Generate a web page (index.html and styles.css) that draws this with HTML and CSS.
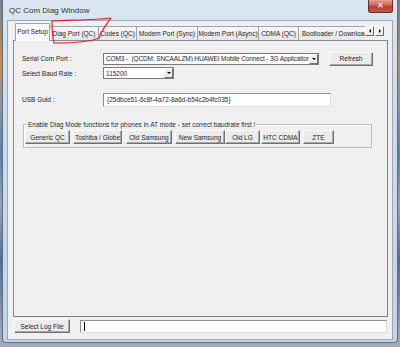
FILE: index.html
```
<!DOCTYPE html>
<html lang="en">
<head>
  <meta charset="UTF-8">
  <title>QC Com Diag Window</title>
  <link rel="stylesheet" href="styles.css">
</head>
<body>
  <div class="window">
    <div class="titlebar">
      <span class="title">QC Com Diag Window</span>
      <div class="close-btn">&#x2715;</div>
    </div>

    <div class="client">
      <!-- Tab strip -->
      <div class="tabs">
        <div class="tab active w-t1">Port Setup</div>
        <div class="tab w-t2">Diag Port (QC)</div>
        <div class="tab w-t3">Codes (QC)</div>
        <div class="tab w-t4">Modem Port (Sync)</div>
        <div class="tab w-t5">Modem Port (Async)</div>
        <div class="tab w-t6">CDMA (QC)</div>
        <div class="tab cut">Bootloader / Downloac</div>
        <div class="tab-arrows">
          <div class="arrow-btn"><span class="tri left"></span></div>
          <div class="arrow-btn"><span class="tri right"></span></div>
        </div>
      </div>

      <!-- Port Setup page -->
      <div class="panel">
        <div class="row row-com">
          <div class="label">Serial Com Port :</div>
          <div class="combo combo-com">
            <span class="combo-text tight">COM3 -&nbsp; (QCDM: SNCAALZM) HUAWEI Mobile Connect - 3G Application Ir</span>
            <span class="combo-btn"><span class="tri down"></span></span>
          </div>
          <button class="btn refresh-btn">Refresh</button>
        </div>
        <div class="row row-baud">
          <div class="label">Select Baud Rate :</div>
          <div class="combo combo-baud">
            <span class="combo-text">115200</span>
            <span class="combo-btn"><span class="tri down"></span></span>
          </div>
        </div>
        <div class="row row-guid">
          <div class="label">USB Guid :</div>
          <div class="textbox guid-box">{25dbce51-6c8f-4a72-8a6d-b54c2b4fc035}</div>
        </div>

        <fieldset class="group">
          <legend>Enable Diag Mode functions for phones in AT mode - set correct baudrate first !</legend>
          <div class="group-buttons">
            <button class="btn w-generic">Generic QC</button>
            <button class="btn w-toshiba">Toshiba / Globe</button>
            <button class="btn w-oldsam">Old Samsung</button>
            <button class="btn w-newsam">New Samsung</button>
            <button class="btn w-oldlg">Old LG</button>
            <button class="btn w-htc">HTC CDMA</button>
            <button class="btn w-zte">ZTE</button>
          </div>
        </fieldset>
      </div>

      <!-- Log file row -->
      <div class="log-row">
        <button class="btn log-btn">Select Log File</button>
        <div class="textbox log-box"><span class="caret"></span></div>
      </div>
    </div>
  </div>

  <!-- hand-drawn red mark over the second tab -->
  <svg class="scribble" width="400" height="60" viewBox="0 0 400 60">
    <path d="M52 21 C 70 20, 95 20, 111 18 C 106 25, 101 31, 99 38 C 90 42, 70 43, 54 43 C 52 35, 52 28, 52 21 Z"
          fill="none" stroke="#e8202a" stroke-width="1.2" stroke-linejoin="round"/>
  </svg>
</body>
</html>
```

FILE: styles.css
```
html, body { margin: 0; padding: 0; }
body {
  width: 400px; height: 347px; overflow: hidden; position: relative;
  font-family: "Liberation Sans", Arial, sans-serif; font-size: 6.5px; color: #1e1e1e;
  background: linear-gradient(180deg, #6f8299 0%, #c98a4a 18%, #8c94a0 30%, #5a7fa8 45%, #9aa3ae 60%, #4d6e93 75%, #a7adb5 100%);
}

.window {
  margin-left: 2px; width: 396px; height: 343px;
  background: linear-gradient(180deg, #dbe6f2 0%, #cfdcec 30%, #c3d4e8 100%);
  border: 1px solid #5d6f86; border-top: none; border-radius: 0 0 4px 4px;
  box-sizing: border-box; display: flex; flex-direction: column;
}

.titlebar { height: 20px; display: flex; align-items: flex-start; justify-content: space-between; flex-shrink: 0; }
.title { font-size: 8px; color: #333; margin: 6px 0 0 6px; }
.close-btn {
  width: 25px; height: 13px; margin-right: 4px; border: 1px solid #6b2a2a; border-top: none;
  border-radius: 0 0 3px 3px; box-sizing: border-box;
  background: linear-gradient(180deg, #e4a092 0%, #d0604e 45%, #b83a2a 55%, #c85a48 100%);
  color: #fff; font-size: 8px; font-weight: bold; text-align: center; line-height: 11px;
  text-shadow: 0 0 1px #4a1010;
}

.client {
  flex: 1; margin: 0 4px 2px 4px; background: #f0f0f0;
  border: 1px solid #9aa8b8; display: flex; flex-direction: column;
}

/* tabs */
.tabs { height: 19px; display: flex; align-items: flex-end; padding-left: 7px; position: relative; }
.tab {
  height: 14px; margin-right: -1px; line-height: 14px; white-space: nowrap; text-align: center;
  border: 1px solid #a0a4aa; border-bottom: none; box-sizing: border-box;
  background: linear-gradient(180deg, #f7f7f7, #e6e6e6);
}
.tab.active { height: 18px; background: #f9f9f9; position: relative; z-index: 2; margin-bottom: -1px; line-height: 16px; }
.w-t1 { width: 35px; }
.w-t2 { width: 50px; }
.w-t3 { width: 39px; }
.w-t4 { width: 62px; }
.w-t5 { width: 62px; }
.w-t6 { width: 41px; }
.tab.cut { width: 67px; overflow: hidden; border-right: none; text-align: left; padding-left: 3px; }
.tab-arrows { display: flex; gap: 1px; margin-left: 1px; margin-bottom: 4px; }
.arrow-btn {
  width: 9px; height: 10px; box-sizing: border-box; background: #f0f0f0;
  border: 1px solid; border-color: #fff #6a6a6a #6a6a6a #fff;
  display: flex; align-items: center; justify-content: center;
}

.tri { display: block; width: 0; height: 0; border-style: solid; }
.tri.left { border-width: 2px 2px 2px 0; border-color: transparent #000 transparent transparent; }
.tri.right { border-width: 2px 0 2px 2px; border-color: transparent transparent transparent #000; }
.tri.down { border-width: 2px 2px 0 2px; border-color: #000 transparent transparent transparent; }

/* page */
.panel {
  height: 277px; margin: 0 4px 0 5px; box-sizing: border-box; background: #f0f0f0;
  border: 1px solid #898c95; border-right-color: #7c7f86; border-bottom-color: #7c7f86;
  padding: 10px 0 0 8px; position: relative; z-index: 1;
}
.row { display: flex; align-items: center; }
.label { width: 81px; }
.row-com { height: 15px; }
.row-baud { height: 14px; }
.row-guid { margin-top: 12px; height: 15px; }

.combo {
  height: 12px; box-sizing: border-box; background: #fff; border: 1px solid #7a7a7a;
  display: flex; align-items: center; overflow: hidden;
}
.combo-text { flex: 1; padding-left: 2px; white-space: nowrap; overflow: hidden; }
.combo-text.tight { letter-spacing: -0.12px; }
.combo-btn {
  width: 9px; height: 10px; box-sizing: border-box; background: #ececec;
  border: 1px solid; border-color: #fff #707070 #707070 #fff;
  display: flex; align-items: center; justify-content: center; flex-shrink: 0;
}
.combo-com { width: 216px; }
.combo-baud { width: 71px; }

.textbox { height: 14px; box-sizing: border-box; background: #fff; border: 1px solid #8e8f8f; border-right-color: #dcdcdc; border-bottom-color: #dcdcdc; padding-left: 3px; line-height: 12px; }
.guid-box { width: 228px; }

.btn {
  font: inherit; color: inherit; height: 14px; padding: 0; box-sizing: border-box; background: #ebebeb;
  border: 1px solid; border-color: #fbfbfb #707070 #707070 #fbfbfb; white-space: nowrap;
  box-shadow: inset -1px -1px 0 #a8a8a8;
}
.refresh-btn { width: 44px; margin-left: 10px; }

.group {
  margin: 14px 15px 0 1px; padding: 1px; border: 1px solid #bfbfbf;
  box-shadow: 1px 1px 0 #fff inset; height: 27px; box-sizing: border-box;
}
.group legend { padding: 0 1px; margin-left: 2px; line-height: 7px; white-space: nowrap; }
.group-buttons { display: flex; gap: 3px; margin-top: 1px; }
.w-generic { width: 45px; }
.w-toshiba { width: 49px; }
.w-oldsam { width: 46px; margin-left: 1px; }
.w-newsam { width: 50px; }
.w-oldlg { width: 35px; margin-left: -3px; }
.w-htc { width: 39px; margin-left: -2px; }
.w-zte { width: 31px; }

.log-row { display: flex; align-items: center; gap: 10px; padding: 2px 5px 0 6px; }
.log-btn { width: 56px; height: 14px; }
.log-box { flex: 1; height: 13px; position: relative; }
.caret { display: block; width: 1px; height: 9px; background: #000; margin-top: 1px; }

.scribble { position: absolute; left: 0; top: 0; pointer-events: none; z-index: 10; }
```
